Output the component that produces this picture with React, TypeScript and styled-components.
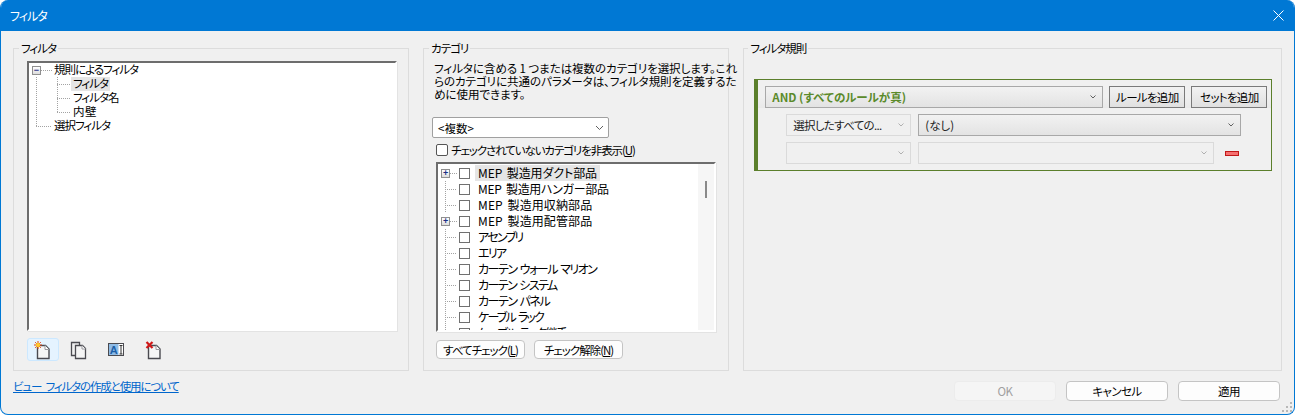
import styled, { createGlobalStyle } from "styled-components"

const treeRows = [
  { label: "MEP 製造用ダクト部品", spacing: -0.1, expandable: true, selected: true },
  { label: "MEP 製造用ハンガー部品", spacing: -0.3 },
  { label: "MEP 製造用収納部品", spacing: 0.1 },
  { label: "MEP 製造用配管部品", spacing: 0.1, expandable: true },
  { label: "アセンブリ", spacing: -1.7 },
  { label: "エリア", spacing: -1.7 },
  { label: "カーテン ウォール マリオン", spacing: -1.5 },
  { label: "カーテン システム", spacing: -1.6 },
  { label: "カーテン パネル", spacing: -1.5 },
  { label: "ケーブル ラック", spacing: -1.8 },
  { label: "ケーブル ラック継手", spacing: -1.5 },
]

const filterNames = [
  { name: "フィルタ", spacing: -1 },
  { name: "フィルタ名", spacing: -1 },
  { name: "内壁", spacing: 0.5 },
]

const Chevron = ({ color = "#606060" }: { color?: string }) => (
  <svg width="9" height="6" viewBox="0 0 9 6" fill="none">
    <path d="M1 1l3.5 3.5L8 1" stroke={color} strokeWidth="1" />
  </svg>
)

const SmallChevron = ({ color = "#606060" }: { color?: string }) => (
  <svg width="6" height="4" viewBox="0 0 6 4" fill="none">
    <path d="M0.500 0.500L3 3l2.500-2.500" stroke={color} strokeWidth="1" />
  </svg>
)

const Page = () => (
  <>
    <path d="M4.5 5.5h8l3.500 3.500v9.500H4.500z" fill="#f6f6f6" stroke="#4a4a50" strokeWidth="1.4" />
    <path d="M12 5.500v4h4" fill="#fff" stroke="#9a9aa0" strokeWidth="1" />
  </>
)

const NewIcon = () => (
  <svg width="20" height="20" viewBox="0 0 20 20">
    <Page />
    <path d="M5 1v8M1 5h8M2.200 2.200l5.600 5.600M7.800 2.200l-5.600 5.600" stroke="#e04010" strokeWidth="1" />
    <circle cx="5" cy="5" r="2.200" fill="#ffc830" />
  </svg>
)

const CopyIcon = () => (
  <svg width="20" height="20" viewBox="0 0 20 20">
    <path d="M7 15.500H2.500V2.500h8V5" fill="none" stroke="#4a4a50" strokeWidth="1.3" />
    <path d="M6.500 5.500h7l3 3v10h-10z" fill="#f4f4f4" stroke="#4a4a50" strokeWidth="1.3" />
    <path d="M13 5.500v3.500h3.500" fill="#fff" stroke="#9a9aa0" strokeWidth="1" />
  </svg>
)

const RenameIcon = () => (
  <svg width="18" height="14" viewBox="0 0 18 14">
    <rect x="2.500" y="0.500" width="15" height="12" fill="#fff" stroke="#4a4a50" />
    <rect x="3" y="1" width="9.500" height="11" fill="#8fbce6" />
    <text x="7.800" y="10.500" textAnchor="middle" fontSize="11" fontWeight="700" fontFamily="Liberation Sans" fill="#1c5fa8">
      A
    </text>
    <path d="M13.500 2.500h3M15 2.500v8.500M13.500 11h3" stroke="#333" strokeWidth="1" fill="none" />
  </svg>
)

const DeleteIcon = () => (
  <svg width="20" height="20" viewBox="0 0 20 20">
    <g transform="translate(3 0)">
      <Page />
    </g>
    <path d="M5.500 2l6 6M11.500 2l-6 6" stroke="#d01818" strokeWidth="2.200" />
  </svg>
)

export default function App() {
  return (
    <>
      <GlobalStyle />
      <Window>
        <TitleBar>
          <Title>フィルタ</Title>
          <svg width="11" height="11" viewBox="0 0 11 11">
            <path d="M0.500 0.500l10 10M10.500 0.500l-10 10" stroke="#fff" strokeWidth="1" />
          </svg>
        </TitleBar>
        <Body>
          <Groups>
            <FilterGroup>
              <Legend $offset={-8}>フィルタ</Legend>
              <FilterTree>
                <TreeRow $indent={3}>
                  <Expander>−</Expander>
                  <Elbow $width={11} $vertical="none" />
                  <TreeLabel $spacing={-1}>規則によるフィルタ</TreeLabel>
                </TreeRow>
                {filterNames.map((item, i) => (
                  <TreeRow key={item.name} $indent={7}>
                    <Pipe $width={21} />
                    <Elbow $width={14} $vertical={i === 2 ? "half" : "full"} />
                    <TreeLabel $selected={i === 0} $spacing={item.spacing}>
                      {item.name}
                    </TreeLabel>
                  </TreeRow>
                ))}
                <TreeRow $indent={7}>
                  <Elbow $width={16} $vertical="half" />
                  <TreeLabel $spacing={-1}>選択フィルタ</TreeLabel>
                </TreeRow>
              </FilterTree>
              <Toolbar>
                <ToolButton $active>
                  <NewIcon />
                </ToolButton>
                <ToolButton>
                  <CopyIcon />
                </ToolButton>
                <ToolButton>
                  <RenameIcon />
                </ToolButton>
                <ToolButton>
                  <DeleteIcon />
                </ToolButton>
              </Toolbar>
            </FilterGroup>

            <CategoryGroup>
              <Legend $offset={-3}>カテゴリ</Legend>
              <Description>
                フィルタに含める 1 つまたは複数のカテゴリを選択します。これ
                <br />
                らのカテゴリに共通のパラメータは、フィルタ規則を定義するた
                <br />
                めに使用できます。
              </Description>
              <CategorySelect>
                &lt;複数&gt;
                <Chevron />
              </CategorySelect>
              <HideRow>
                <HideBox />
                <span>
                  チェックされていないカテゴリを非表示(<u>U</u>)
                </span>
              </HideRow>
              <CategoryList>
                <CategoryRows>
                  {treeRows.map((row) => (
                    <TreeRow key={row.label} $indent={row.expandable ? 3 : 7} $height={16}>
                      {row.expandable ? (
                        <>
                          <Expander>+</Expander>
                          <Elbow $width={7} $vertical="none" />
                        </>
                      ) : (
                        <Elbow $width={12} $vertical="full" />
                      )}
                      <RowCheck />
                      <CategoryLabel $selected={row.selected} $spacing={row.spacing}>
                        {row.label}
                      </CategoryLabel>
                    </TreeRow>
                  ))}
                </CategoryRows>
                <Scrollbar>
                  <Thumb />
                </Scrollbar>
              </CategoryList>
              <CheckButtons>
                <SmallButton>
                  <span>
                    すべてチェック(<u>L</u>)
                  </span>
                </SmallButton>
                <SmallButton>
                  <span>
                    チェック解除(<u>N</u>)
                  </span>
                </SmallButton>
              </CheckButtons>
            </CategoryGroup>

            <RuleGroup>
              <Legend $offset={-6}>フィルタ規則</Legend>
              <RuleSet>
                <RuleHeader>
                  <RuleSelect $width={338} $bold>
                    AND (すべてのルールが真)
                    <SmallChevron />
                  </RuleSelect>
                  <AddButton>ルールを追加</AddButton>
                  <AddButton>セットを追加</AddButton>
                </RuleHeader>
                <RuleRow>
                  <RuleSelect $width={125} $disabled $spacing={-0.7}>
                    選択したすべての...
                    <SmallChevron color="#b0b0b0" />
                  </RuleSelect>
                  <RuleSelect $width={323}>
                    (なし)
                    <SmallChevron />
                  </RuleSelect>
                </RuleRow>
                <RuleRow>
                  <RuleSelect $width={125} $disabled>
                    <span />
                    <SmallChevron color="#b0b0b0" />
                  </RuleSelect>
                  <RuleSelect $width={296} $disabled>
                    <span />
                    <SmallChevron color="#b0b0b0" />
                  </RuleSelect>
                  <RemoveRule />
                </RuleRow>
              </RuleSet>
            </RuleGroup>
          </Groups>

          <Footer>
            <HelpLink href="#">ビュー フィルタの作成と使用について</HelpLink>
            <DialogButtons>
              <DialogButton disabled>OK</DialogButton>
              <DialogButton>キャンセル</DialogButton>
              <DialogButton>適用</DialogButton>
            </DialogButtons>
          </Footer>
        </Body>
        <Grip width="10" height="10" viewBox="0 0 10 10">
          <path d="M8 0h2v2H8zM4 4h2v2H4zM8 4h2v2H8zM0 8h2v2H0zM4 8h2v2H4zM8 8h2v2H8z" fill="#b8b8b8" />
        </Grip>
      </Window>
    </>
  )
}

const GlobalStyle = createGlobalStyle`
  html, body {
    margin: 0;
    background: #fff;
    overflow: hidden;
  }
  body {
    font-family: "Noto Sans CJK JP", "Noto Sans", sans-serif;
    font-size: 11.5px;
    font-feature-settings: "palt";
    color: #000;
  }
`

const Window = styled.div`
  position: relative;
  box-sizing: border-box;
  width: 1295px;
  height: 415px;
  display: flex;
  flex-direction: column;
  border: 1px solid #0078d4;
  border-top: 0;
  border-radius: 8px;
  overflow: hidden;
  background: #f0f0f0;
`

const TitleBar = styled.div`
  flex: none;
  height: 31px;
  margin: 0 -1px;
  padding: 0 11px 0 10px;
  display: flex;
  align-items: center;
  justify-content: space-between;
  background: #0078d4;
`

const Title = styled.span`
  color: #fff;
  font-size: 12px;
  letter-spacing: -1px;
`

const Body = styled.div`
  flex: 1;
  display: flex;
  flex-direction: column;
  padding: 10px 12px 0;
`

const Groups = styled.div`
  display: flex;
  gap: 14px;
  height: 330px;
`

const Group = styled.fieldset`
  box-sizing: border-box;
  min-width: 0;
  margin: 0;
  border: 1px solid #dcdcdc;
  display: flex;
  flex-direction: column;
`

const Legend = styled.legend<{ $offset: number }>`
  padding: 0 2px;
  margin-left: ${({ $offset }) => $offset}px;
  font-size: 11.5px;
  line-height: 14px;
  letter-spacing: -1px;
`

const FilterGroup = styled(Group)`
  width: 397px;
  padding: 6px 11px 0 13px;
`

const CategoryGroup = styled(Group)`
  width: 307px;
  padding: 7px 12px 0 8px;
`

const RuleGroup = styled(Group)`
  width: 540px;
  padding: 24px 9px 0 10px;
`

const Sunken = styled.div`
  box-sizing: border-box;
  background: #fff;
  border-style: solid;
  border-width: 2px;
  border-color: #6d6d6d #fff #fff #6d6d6d;
  box-shadow: 1px 1px 0 #e3e3e3;
`

const FilterTree = styled(Sunken)`
  height: 270px;
`

const TreeRow = styled.div<{ $indent: number; $height?: number }>`
  display: flex;
  align-items: stretch;
  height: ${({ $height }) => $height ?? 14}px;
  padding-left: ${({ $indent }) => $indent}px;
`

const dots = "#a3a3a3 0 1px, transparent 1px 2px"

const Pipe = styled.span<{ $width: number }>`
  flex: none;
  width: ${({ $width }) => $width}px;
  background: repeating-linear-gradient(to bottom, ${dots}) 0 0 / 1px 100% no-repeat;
`

const verticalSize = { full: "100%", half: "50%", none: "0" }

const Elbow = styled.span<{ $width: number; $vertical: "full" | "half" | "none" }>`
  flex: none;
  width: ${({ $width }) => $width}px;
  background:
    repeating-linear-gradient(to bottom, ${dots}) 0 0 / 1px ${({ $vertical }) => verticalSize[$vertical]} no-repeat,
    repeating-linear-gradient(to right, ${dots}) 0 50% / 100% 1px no-repeat;
`

const Expander = styled.span`
  flex: none;
  box-sizing: border-box;
  align-self: center;
  width: 9px;
  height: 9px;
  border: 1px solid #8f8f8f;
  background: linear-gradient(#fff, #dcdcdc);
  color: #1c2f86;
  font-family: "Liberation Sans", sans-serif;
  font-size: 9px;
  font-weight: 700;
  line-height: 7px;
  text-align: center;
`

const TreeLabel = styled.span<{ $selected?: boolean; $spacing?: number }>`
  padding: 0 2px 1px;
  line-height: 13px;
  white-space: nowrap;
  letter-spacing: ${({ $spacing }) => $spacing ?? 0}px;
  background: ${({ $selected }) => ($selected ? "#e5e5e5" : "transparent")};
`

const Toolbar = styled.div`
  display: flex;
  gap: 4px;
  margin-top: 7px;
`

const ToolButton = styled.div<{ $active?: boolean }>`
  box-sizing: border-box;
  width: 32px;
  height: 23px;
  display: flex;
  align-items: center;
  justify-content: center;
  border: 1px solid ${({ $active }) => ($active ? "#cce8ff" : "transparent")};
  border-radius: 3px;
  background: ${({ $active }) => ($active ? "#e5f3ff" : "transparent")};
`

const Description = styled.p`
  margin: 0 0 0 2px;
  height: 55px;
  font-size: 11.5px;
  line-height: 13px;
  letter-spacing: -0.05px;
  white-space: nowrap;
`

const CategorySelect = styled.div`
  box-sizing: border-box;
  width: 177px;
  height: 21px;
  padding: 0 4px 0 5px;
  display: flex;
  align-items: center;
  justify-content: space-between;
  background: #fff;
  border: 1px solid #a0a0a0;
  border-radius: 2px;
`

const HideRow = styled.label`
  margin: 5px 0 0 4px;
  height: 14px;
  display: flex;
  align-items: center;
  gap: 3px;
  white-space: nowrap;
  letter-spacing: -1.1px;
`

const HideBox = styled.span`
  flex: none;
  box-sizing: border-box;
  width: 12px;
  height: 12px;
  background: #fff;
  border: 1px solid #555;
  border-radius: 2px;
`

const CategoryList = styled(Sunken)`
  margin: 5px 0 0 4px;
  width: 280px;
  height: 170px;
  display: flex;
  overflow: hidden;
`

const CategoryRows = styled.div`
  flex: 1;
  padding-top: 1px;
  overflow: hidden;
`

const RowCheck = styled.span`
  flex: none;
  box-sizing: border-box;
  align-self: center;
  width: 11px;
  height: 11px;
  margin: 0 5px 0 2px;
  background: #fff;
  border: 1px solid #707070;
`

const CategoryLabel = styled(TreeLabel)`
  padding: 0 3px;
  font-size: 12px;
  line-height: 15px;
  word-spacing: 2px;
`

const Scrollbar = styled.div`
  flex: none;
  width: 16px;
  padding: 17px 0 0 7px;
  box-sizing: border-box;
  background: #f6f6f6;
`

const Thumb = styled.div`
  width: 2px;
  height: 17px;
  background: #8a8a8a;
`

const CheckButtons = styled.div`
  display: flex;
  gap: 9px;
  margin: 8px 0 0 4px;
`

const SmallButton = styled.div`
  box-sizing: border-box;
  width: 89px;
  height: 19px;
  display: flex;
  align-items: center;
  justify-content: center;
  white-space: nowrap;
  letter-spacing: -1px;
  background: #fdfdfd;
  border: 1px solid #c4c4c4;
  border-radius: 4px;
`

const RuleSet = styled.div`
  box-sizing: border-box;
  height: 92px;
  border: 1px solid #5b7f2b;
  border-left-width: 4px;
`

const RuleHeader = styled.div`
  display: flex;
  gap: 6px;
  padding: 6px 6px 0 7px;
  height: 28px;
  box-sizing: border-box;
  background: linear-gradient(#f0f0f0 60%, #e9e9e9);
`

const RuleRow = styled.div`
  display: flex;
  align-items: center;
  gap: 7px;
  padding-left: 28px;
  margin-top: 6px;
`

const RuleSelect = styled.div<{ $width: number; $bold?: boolean; $disabled?: boolean; $spacing?: number }>`
  box-sizing: border-box;
  flex: none;
  width: ${({ $width }) => $width}px;
  height: 22px;
  padding: 0 6px;
  display: flex;
  align-items: center;
  justify-content: space-between;
  white-space: nowrap;
  letter-spacing: ${({ $spacing }) => $spacing ?? 0}px;
  color: ${({ $bold }) => ($bold ? "#5a8a2a" : "#222")};
  font-weight: ${({ $bold }) => ($bold ? 700 : 400)};
  border: 1px solid ${({ $disabled }) => ($disabled ? "#dadada" : "#a8a8a8")};
  background: ${({ $disabled }) => ($disabled ? "#f0f0f0" : "linear-gradient(#f2f2f2, #e3e3e3)")};
`

const AddButton = styled.div`
  box-sizing: border-box;
  flex: none;
  width: 76px;
  height: 22px;
  display: flex;
  align-items: center;
  justify-content: center;
  white-space: nowrap;
  letter-spacing: -0.7px;
  border: 1px solid #7a7a7a;
  background: linear-gradient(#f2f2f2, #e0e0e0);
`

const RemoveRule = styled.span`
  box-sizing: border-box;
  width: 14px;
  height: 5px;
  margin-left: 4px;
  background: #f57070;
  border: 1px solid #c01818;
`

const Footer = styled.div`
  display: flex;
  justify-content: space-between;
  align-items: center;
  padding: 10px 2px 0 0;
`

const HelpLink = styled.a`
  color: #0066cc;
  text-decoration: underline;
  letter-spacing: -1.15px;
  word-spacing: 3px;
  margin-top: -11px;
`

const DialogButtons = styled.div`
  display: flex;
  gap: 10px;
`

const DialogButton = styled.button`
  box-sizing: border-box;
  width: 102px;
  height: 20px;
  padding: 0;
  font: inherit;
  font-feature-settings: inherit;
  letter-spacing: -0.6px;
  color: #000;
  background: #fdfdfd;
  border: 1px solid #c4c4c4;
  border-radius: 4px;

  &:disabled {
    color: #a0a0a0;
    background: #f5f5f5;
    border-color: #ececec;
  }
`

const Grip = styled.svg`
  position: absolute;
  right: 2px;
  bottom: 2px;
`
